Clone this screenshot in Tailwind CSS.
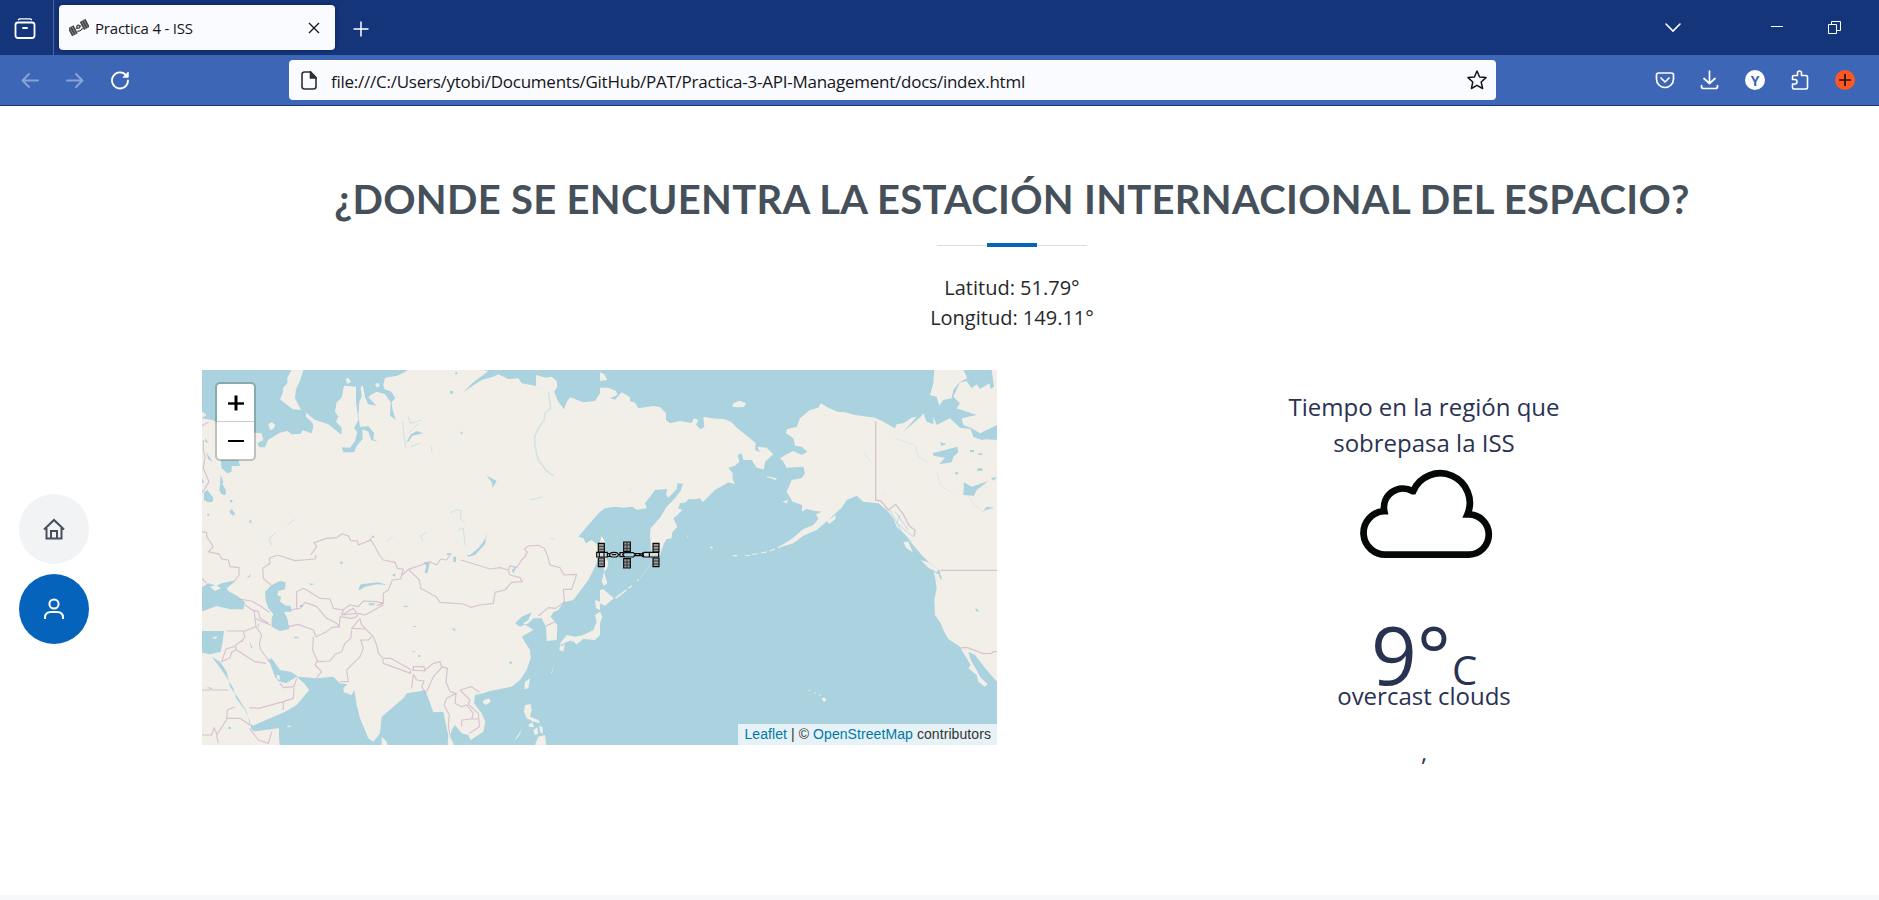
<!DOCTYPE html>
<html lang="es">
<head>
<meta charset="utf-8">
<title>Practica 4 - ISS</title>
<script src="https://cdn.jsdelivr.net/npm/@tailwindcss/browser@4"></script>
</head>
<body class="w-[1879px] h-[900px] overflow-hidden bg-white font-['Open_Sans',sans-serif]">
<div class="flex flex-col h-[900px]">
  <!-- Tab strip -->
  <header class="flex h-[55px] shrink-0 bg-[#15357b] text-white">
    <div class="flex w-[54px] items-center justify-center border-r border-[#4a659c] pt-0.5 pr-1">
      <svg class="w-[22px] h-[22px]" viewBox="0 0 22 22" fill="none" stroke="currentColor" stroke-width="1.8" stroke-linecap="round"><path d="M4.500 1.700Q5 .900 6 .900H16Q17 .900 17.500 1.700" stroke-width="1.300"/><rect x="1.500" y="4.500" width="19" height="15.500" rx="2.500"/><path d="M9 10h4"/></svg>
    </div>
    <div class="ml-[5px] mt-[5px] flex h-[45px] w-[276px] items-center rounded bg-[#fafbff] pl-[10px] pr-[15px] text-[#15141a] shadow-[0_0_4px_#0006]">
      <svg class="w-[20px] h-[18px]" viewBox="0 0 20 18"><g transform="rotate(-28 10 9)"><path d="M0 4h6.500v9H0zM13.500 4H20v9h-6.500z" fill="#444"/><path d="M2 4v9M4.500 4v9M15.500 4v9M18 4v9" stroke="#bbb" stroke-width=".5"/><circle cx="10" cy="7.500" r="1.600" fill="#bbb" stroke="#333"/><path d="M7 11q3 2 6 0M7 8h1.500M11.500 8H13" stroke="#333" fill="none"/></g></svg>
      <span class="ml-[6px] flex-1 pt-px text-[15px] tracking-[-0.2px]">Practica 4 - ISS</span>
      <svg class="w-[12px] h-[12px]" viewBox="0 0 12 12" stroke="currentColor" stroke-width="1.300"><path d="M1 1l10 10M11 1L1 11"/></svg>
    </div>
    <svg class="ml-[18px] mt-[21px] w-[16px] h-[16px]" viewBox="0 0 16 16" stroke="currentColor" stroke-width="1.500"><path d="M8 .5v15M.5 8h15"/></svg>
    <div class="ml-auto flex items-start pr-[38px]">
      <svg class="mt-[22px] mr-[89px] w-[18px] h-[11px]" viewBox="0 0 18 11" fill="none" stroke="currentColor" stroke-width="1.600" stroke-linecap="round"><path d="M2 2l7 7 7-7"/></svg>
      <div class="mt-[26px] mr-[45px] h-px w-[12px] bg-white"></div>
      <svg class="mt-[21px] w-[13px] h-[13px]" viewBox="0 0 13 13" fill="none" stroke="currentColor"><path d="M.5 3.500h8v9h-8zM3.500 3V.5h9v9H9"/></svg>
    </div>
  </header>
  <!-- Toolbar -->
  <div class="flex h-[51px] shrink-0 items-start border-b border-[#15357b] bg-[#3e66b7] text-white">
    <div class="flex w-[289px] items-center gap-[27px] pl-[21px] pt-[15px]">
      <svg class="w-[18px] h-[18px] opacity-40" viewBox="0 0 18 18" fill="none" stroke="currentColor" stroke-width="1.800" stroke-linecap="round" stroke-linejoin="round"><path d="M17 9.500H1.500M8 3L1.500 9.500 8 16"/></svg>
      <svg class="w-[18px] h-[18px] opacity-40" viewBox="0 0 18 18" fill="none" stroke="currentColor" stroke-width="1.800" stroke-linecap="round" stroke-linejoin="round"><path d="M1 9.500h15.500M10 3l6.500 6.500-6.500 6.500"/></svg>
      <svg class="-ml-px w-[20px] h-[20px]" viewBox="0 0 20 20" fill="none" stroke="currentColor" stroke-width="1.800" stroke-linecap="round"><path d="M16.300 5.500A8 8 0 1 0 18 10.500"/><path d="M18.200 2.500v4.700h-4.700z" fill="currentColor" stroke-width="1"/></svg>
    </div>
    <div class="mt-[5px] flex h-[40px] w-[1207px] items-center rounded bg-[#fafbff] pl-[12px] pr-[8px] text-[#15141a]">
      <svg class="w-[16px] h-[19px]" viewBox="0 0 16 19" fill="none" stroke="#2d2e33" stroke-width="1.600"><path d="M3.500 1H9.500L15 6.500V15.500Q15 18 12.500 18H3.500Q1 18 1 15.500V3.500Q1 1 3.500 1Z"/><path d="M9.500 1v6H15z" fill="#2d2e33"/></svg>
      <span class="ml-[14px] flex-1 pt-[4px] text-[17px] tracking-[-0.25px]">file:///C:/Users/ytobi/Documents/GitHub/PAT/Practica-3-API-Management/docs/index.html</span>
      <svg class="w-[22px] h-[22px]" viewBox="0 0 22 22" fill="none" stroke="currentColor" stroke-width="1.500" stroke-linejoin="round"><path d="M11 2l2.600 6 6.400.6-4.800 4.400 1.400 6.500L11 16.300 5.400 19.500 6.800 13 2 8.600 8.400 8z"/></svg>
    </div>
    <div class="ml-auto flex items-center gap-[25px] pr-[24px] pt-[15px]">
      <svg class="w-[20px] h-[20px]" viewBox="0 0 20 20" fill="none" stroke="currentColor" stroke-width="1.700" stroke-linecap="round" stroke-linejoin="round"><path d="M3.500 3h13Q18.500 3 18.500 5V9A8.500 8.500 0 0 1 1.500 9V5Q1.500 3 3.500 3Z"/><path d="M6 8l4 4 4-4"/></svg>
      <svg class="w-[20px] h-[20px]" viewBox="0 0 20 20" fill="none" stroke="currentColor" stroke-width="1.700" stroke-linecap="round" stroke-linejoin="round"><path d="M9.500 1v12.500M4 8.500L9.500 13.500l5.500-5M1.500 15.500V16.500Q1.500 18.500 3.500 18.500H15.500Q17.500 18.500 17.500 16.500V15.500"/></svg>
      <div class="flex h-[20px] w-[20px] items-center justify-center rounded-full bg-white text-[14px] font-bold text-[#3e66b7]">Y</div>
      <svg class="w-[20px] h-[20px]" viewBox="0 0 20 20" fill="none" stroke="currentColor" stroke-width="1.600" stroke-linejoin="round"><path d="M4 5.500H7.500V3Q7.500 1 9.500 1T11.500 3V5.500H16Q17.500 5.500 17.500 7V17.500Q17.500 19 16 19H4Q2.500 19 2.500 17.500V14H5Q7 14 7 11.800T5 9.500H2.500V7Q2.500 5.500 4 5.500Z"/></svg>
      <svg class="w-[20px] h-[20px]" viewBox="0 0 20 20"><circle cx="10" cy="10" r="10" fill="#ff5722"/><path d="M10 4v12M4 10h12" stroke="#1c1212" stroke-width="1.700"/></svg>
    </div>
  </div>
  <!-- Page -->
  <main class="relative flex flex-1 flex-col border-b-[5px] border-[#f7f8f9] pl-[202px] pr-[57px]">
    <nav class="absolute left-[19px] top-[388px] flex flex-col gap-[10px]">
      <a class="flex h-[70px] w-[70px] items-center justify-center rounded-full bg-[#f2f3f5] text-[#45505b]">
        <svg class="w-[22px] h-[22px]" viewBox="0 0 22 22" fill="none" stroke="currentColor" stroke-width="2"><path d="M1 11.500L11 2l10 9.500M3.500 10v10.500h15V10M8 20.500v-7.500h6v7.500"/></svg>
      </a>
      <a class="flex h-[70px] w-[70px] items-center justify-center rounded-full bg-[#0563bb] text-white">
        <svg class="w-[22px] h-[22px]" viewBox="0 0 22 22" fill="none" stroke="currentColor" stroke-width="2"><circle cx="11" cy="6" r="4.600"/><path d="M2 21v-1.500Q2 14 8 14H14Q20 14 20 19.500V21"/></svg>
      </a>
    </nav>
    <h2 class="mt-[69px] h-[48px] whitespace-nowrap text-center font-['Lato',sans-serif] text-[40px] font-bold leading-[48px] tracking-[0.3px] text-[#45505b]">¿DONDE SE ENCUENTRA LA ESTACIÓN INTERNACIONAL DEL ESPACIO?</h2>
    <div class="mx-auto mt-[20px] flex h-[4px] w-[150px] items-center">
      <span class="h-px flex-1 bg-[#dddddd]"></span><span class="h-[4px] w-[50px] bg-[#0563bb]"></span><span class="h-px flex-1 bg-[#dddddd]"></span>
    </div>
    <div class="mt-[26px] text-center text-[20px] leading-[30px] text-[#272829]">
      <p>Latitud: 51.79°</p>
      <p>Longitud: 149.11°</p>
    </div>
    <div class="mt-[37px] flex gap-[32px] pr-[3px]">
      <!-- Map -->
      <div class="relative h-[375px] w-[795px] shrink-0 overflow-hidden bg-[#aad3df]">
        <svg class="block w-[795px] h-[375px]" viewBox="0 0 795 375">
          <!-- north west quadrant -->
          <svg x="-2" y="-5" width="400" height="190" viewBox="0 0 1200 570">
            <rect width="1200" height="570" fill="#f2efe9"/>
            <g fill="#aad3df">
              <path d="M0 0H620V18L592 32 555 38 550 60 553 72 574 80 586 100 575 112 577 130 582 150 588 165 570 152 572 112 555 88 530 80 512 90 505 97 530 122 505 118 496 100 488 60 482 68 485 95 478 110 475 150 480 185 505 184 522 203 520 222 533 230 514 225 505 200 487 193 488 222 472 240 462 262 430 262 425 247 450 248 465 228 472 200 462 190 475 165 468 110 468 65 432 62 425 98 410 112 405 140 415 155 408 170 425 188 424 209 385 178 345 165 318 143 318 155 337 173 340 185 335 205 308 196 302 206 275 208 263 198 240 203 225 212 204 225 195 247 178 247 172 235 190 225 185 205 165 203 120 180 55 175 38 165 5 160 20 150 0 135Z"/>
              <path d="M850 15H1200V85L1185 108 1150 112 1110 97 1100 112 1092 133 1075 110 1065 90 1045 78 1005 62 965 55 955 40 925 42 895 28 880 35 845 45 825 58 790 82 820 52 838 38 865 18Z"/>
              <path d="M1200 440L1165 480 1135 515 1150 520 1158 535 1175 525 1200 545ZM862 498L857 520 835 550 810 570 825 570 855 538ZM62 285H116L120 303 95 303 95 320 82 325 65 310ZM12 382L22 375 40 398 38 410 25 412 12 405ZM62 330L70 350 67 358 78 375 77 390 65 388 58 375 60 358ZM95 432L106 447 98 452 88 440ZM18 260L38 290 25 283ZM16 220L25 235 15 230ZM6 340L12 352 6 355Z"/>
              <path d="M750 78h9v8h-9zM782 200h5v8h-5zM90 405h7v7h-7zM22 446h6v6h-6zM148 466h6v7h-6zM515 512h8v6h-8zM740 565h14v5h-14zM766 22h6v6h-6z"/>
              <path d="M620 230L632 208 650 198 670 205 637 212 625 230ZM860 332L890 348 878 368 875 352Z"/>
            </g>
            <g fill="none" stroke="#aad3df" stroke-opacity=".5" stroke-width="4">
              <path d="M1045 75L1052 130 1035 145 1033 165 1015 190 1004 215 1005 245 1015 285 1040 318 1062 333"/>
              <g stroke-width="3"><path d="M608 170L612 210 617 250M625 155L632 175 665 165M655 175L625 205M632 245L660 235M695 245V260M750 443L770 434 785 438 780 460 795 475M775 495L790 490 795 540M228 502L208 520 215 542M262 480L285 463M560 530L578 515M678 502L662 512 668 530M990 405L1028 396M1052 520L1065 522"/></g>
            </g>
            <g fill="#f2efe9"><path d="M275 15H310L300 48 288 72 285 100 303 135 278 133 255 115 240 103 248 85 250 68 262 55 262 38ZM205 178L216 172 226 180 220 192 210 195ZM437 42L445 38 453 50 442 57ZM525 56L535 54 540 63 530 68ZM1008 30L1038 38 1055 35 1070 48 1072 65 1062 80 1070 98 1055 88 1025 70 1008 65Z"/></g>
            <g fill="none" stroke="#c9abc4" stroke-opacity=".65" stroke-width="3.500">
              <path d="M0 185L25 172M10 225V255L15 275 10 310 27 350 15 370 6 383M6 500L20 503 20 515 40 545 25 560 60 568M332 570L350 545 342 533 380 520 410 518 425 507 445 512 452 527 473 528 475 540 513 525 525 545 538 570M505 530L513 520M975 570L983 562 973 553 985 543 1015 541 1033 550 1042 570"/>
            </g>
          </svg>
          <!-- north east quadrant -->
          <svg x="398" y="-5" width="400" height="190" viewBox="0 0 1200 570">
            <g fill="#f2efe9">
              <path d="M0 68L25 68 48 78 52 90 30 100 45 104 65 82 90 97 90 108 105 113 115 130 160 123 180 126 198 145 198 165 210 175 240 168 275 174 282 160 295 165 288 180 302 193 313 185 310 155 335 160 375 163 395 172 412 190 450 220 467 235 465 255 480 262 472 245 500 248 520 268 495 290 492 313 470 308 455 285 430 285 425 265 413 270 418 290 405 302 385 308 398 325 398 343 405 358 385 352 345 375 308 412 300 400 285 403 265 402 258 412 240 415 235 430 247 435 232 450 220 460 232 485 217 502 215 520 200 522 192 535 180 570 155 570 150 510 152 490 180 458 200 425 225 400 243 375 249 356 232 355 230 373 205 398 198 388 202 372 165 375 150 395 135 415 140 430 110 434 97 425 70 428 45 425 15 430 0 440ZM0 22L12 27 22 45 0 48ZM397 125L400 115 418 107 438 115 432 126 412 127ZM498 333L530 340 528 345 502 337ZM260 508l5 10-3-1zM0 530L5 512 15 530V570H0ZM330 545h8v5h-8z"/>
              <path d="M540 280L560 268 580 258 605 270 622 260 605 245 585 242 580 220 558 205 560 193 590 185 600 160 630 135 655 128 662 115 685 128 712 140 735 142 765 150 825 158 850 170 885 190 890 178 910 175 935 158 950 155 930 178 910 200 945 170 962 155 970 145 980 170 1000 178 1000 155 1010 180 1050 160 1080 188 1112 192 1120 215 1145 225 1191 215V570H965L935 535 910 505 890 485 880 460 865 440 835 415 790 410 770 392 740 405 725 428 685 465 650 495 610 512 580 535 530 550 575 522 610 492 640 480 655 462 648 448 665 440 645 438 620 432 605 440 607 420 578 410 560 380 575 345 605 340 615 325 610 305 560 308 550 290ZM690 462L708 450 706 462 688 477 680 468ZM547 410l17-5-3 10zM660 460L690 430 715 398 735 390 710 430 700 450 680 455Z"/>
              <path d="M1003 15H1090L1102 40 1080 50 1060 75 1055 100 1030 105 1018 122 1010 95 990 90 1000 55ZM1060 95L1080 52 1100 48 1115 70 1130 58 1140 72 1168 55 1172 72 1182 65 1175 15H1191V180L1140 205 1115 190 1090 180 1085 160 1130 150 1095 138 1070 130 1080 115ZM910 530L925 530 938 562 918 548Z"/>
            </g>
            <g fill="#aad3df"><path d="M998 265L1035 255 1072 245 1075 262 1060 275 1055 292 1018 298 1035 278 1000 272ZM1092 352L1115 365 1165 348 1130 375 1122 392 1090 390ZM1145 445L1160 425 1182 428 1155 436ZM1120 218L1180 208 1191 212 1190 225 1150 222ZM1020 232l20 5-15 6zM1110 255h12v6h-12zM1132 310h15v8h-15zM1065 322h10v6h-10zM1172 340l18-5-8 12zM1135 265h12v5h-12z"/></g>
            <g fill="none" stroke="#aad3df" stroke-opacity=".7"><path d="M870 435L905 500 935 530M885 440L925 495M900 450L890 475 940 515" stroke-width="3"/><path d="M885 220L945 240 955 275 985 292M1010 320L1022 362 1060 385M790 265L815 292M1095 385L1145 440M850 380L858 392M85 378L95 368" stroke-width="2" stroke-opacity=".45"/></g>
            <path d="M550 541L505 560 455 569" fill="none" stroke="#f2efe9" stroke-opacity=".8" stroke-width="4" stroke-dasharray="18 9"/>
            <path d="M827 168V405L843 408 865 435 887 418 910 448 928 483 945 495 942 515" fill="none" stroke="#c9abc4" stroke-opacity=".65" stroke-width="4"/>
          </svg>
          <!-- south west quadrant -->
          <svg x="-2" y="185" width="400" height="195" viewBox="0 0 1200 585">
            <rect width="1200" height="585" fill="#f2efe9"/>
            <g fill="#aad3df">
              <path d="M0 100L25 85 50 92 65 85 110 75 80 100 85 108 115 125 135 142 130 163 90 163 50 153 10 168 0 165ZM0 228H72L68 260 62 290 30 298 0 292Z"/>
              <path d="M195 110L215 90 240 78 257 82 255 103 235 108 232 120 243 125 240 140 258 152 272 155 275 170 252 170 262 190 268 222 240 228 215 215 215 190 220 178 205 160 197 135Z"/>
              <path d="M35 305L60 338 75 360 100 400 108 430 135 465 150 500 155 530 235 520 240 585H1200V0L1185 35 1165 75 1120 135 1090 142 1075 165 1060 172 1052 185 1072 210 1070 255 1040 258 1038 215 1025 190 1000 190 985 205 960 215 945 205 965 185 995 172 985 195 970 205 1000 225 965 245 975 262 990 285 992 310 980 345 960 375 935 395 870 408 850 415 825 420 822 445 845 475 856 500 850 530 812 555 805 540 785 535 765 510 755 525 750 545 770 585H742L745 540 738 510 730 470 700 472 685 430 675 405 650 410 620 415 610 430 545 485 540 535 520 560 505 550 480 490 470 450 463 405 455 420 432 412 430 400 442 388 420 385 400 365 350 370 295 365 272 350 240 345 215 310 205 315 212 330 225 365 235 378 258 385 290 365 312 385 328 405 315 420 290 450 255 470 160 512 148 505 140 470 115 430 90 395 80 350 60 320Z"/>
              <path d="M475 105L482 88 535 82 562 90 530 88 495 95 480 105ZM505 145l20 0-5 6-12 0zM753 220l14 2-2 7zM326 85l18 2-12 4zM420 20h8v6h-8zM283 245h12v5h-12zM612 152h10v4h-10zM640 213h8v3h-8zM635 286l12 4-6 2zM655 300h6v6h-6zM928 320h8v6h-8zM85 516h8v6h-8zM148 258l10 22-5-2zM175 205l4 12-6-5zM935 45L950 35 940 55ZM670 20l20 5-8 30-8-2 5-20zM760 5h8v16h-8zM800 0l25 0-20 5zM575 60l12-5-2 10zM140 68l12-10-2 8zM260 152h12v6h-12zM300 150h8v6h-8zM20 395l20 5-10 3z"/>
            </g>
            <g fill="#f2efe9">
              <path d="M155 585L150 520 170 535 215 530 238 520 235 545 215 585ZM545 545L560 560 565 585 545 585ZM990 370L985 400 973 402 975 380ZM852 435L868 430 872 440 858 450 848 443ZM975 450L992 447 995 465 990 485 1015 495 1020 505 1000 500 980 490 972 470ZM1015 545L1035 540 1040 585 1005 570ZM985 510l12-8 5 15-14-2zM1000 525l12-8 2 20-10 3zM1018 510l10 8 0 20-8-8zM942 558L968 520 955 545ZM1200 170L1185 180 1190 200 1180 225 1150 240 1125 245 1100 240 1080 265 1085 275 1095 265 1090 290 1078 285 1080 270 1115 255 1130 268 1150 252 1185 255 1200 240ZM35 248l18-4-6 8zM230 360l8 0 2 15-8-3zM262 512h10v4h-10zM30 95l18-5 15 10-18 8zM1185 135l15 5v25l-12-5zM780 500l10 30 25 5-10-20-5-20z"/>
              <path d="M1110 250L1120 252 1115 262ZM1065 325l-10 30-2 0z"/>
            </g>
            <g fill="none" stroke="#c9abc4" stroke-opacity=".65" stroke-width="3.500" stroke-linejoin="round">
              <path d="M6 70L20 85M60 0L65 12 85 15 90 35 117 38V60L105 75M213 90L190 70 188 40 210 25 208 10 232 0M232 0L285 17 345 12 348 0M538 0L550 15 585 22 592 40 610 42 605 60 602 72 577 75 565 105 550 115V145L530 152M625 43L607 60M625 43L655 33 690 20 710 30 722 12 740 15 750 0M783 15L870 42 900 38 925 45 930 32 950 38 965 15 980 0M1042 0L1050 30 1080 38 1092 60 1130 58 1115 103H1090L1093 140 1068 160 1045 158 1015 183M625 43L658 75 662 100 708 125 720 142 790 147 812 157 840 150 880 145 885 112 915 105 935 82 967 80 960 68 930 60 925 48"/>
              <path d="M115 132L155 138 185 155 190 160 208 172M160 165L175 170 180 190 205 205M162 165L165 190 175 195 212 210M135 150L162 168M165 190L168 215M80 228H135L168 215 185 240 178 265 182 285 205 315 205 320M290 160V110L310 100 325 108 360 130 390 132 400 160 428 165 450 150 475 155 490 138 530 140 550 145M270 165L300 160 315 142 350 155 380 190 410 205 418 215M265 215L295 208 340 225 348 245 380 230 395 218 420 215M340 245L338 285 352 318 345 330 365 350 350 368M352 320L390 318 405 298 425 290 435 265 452 250 455 225M418 215L420 185 455 190 470 185 475 175 495 180 550 150M430 165L425 180 470 175 460 160 430 178M480 190L485 210 520 245 530 270 535 295 550 310M480 190L455 220 495 222M515 245L505 255 482 255 490 280 480 305 440 345 445 380 420 380M550 310L572 310 630 342 632 355 550 325 548 312M635 345L675 348 672 335 640 335V348M675 345L700 325 720 320 725 338 700 365 680 410M640 358L635 400M640 358L650 375 672 378 665 395 678 415M725 335L742 340 738 380 750 410 768 415 740 430 732 450 748 480 745 510 750 540M768 415L765 445 785 455 800 450 820 475 815 492 785 495 785 515M780 405L815 395 838 412M780 405L810 435 805 448 835 475 838 515 808 535M815 492H838M103 275L78 282 65 320 90 308 95 292 108 285M128 255L105 272 110 285 165 320 198 325M130 230L135 245 125 260M240 385L250 398 282 395 290 370M282 400L280 430 250 440 250 465M250 440L175 460 148 458M6 405H85M105 455L82 465 80 490 120 490 150 510M82 490L50 540 55 565M6 540L35 540 42 518 52 540M148 520L175 555 205 565 215 530M1038 213L1065 200"/>
            </g>
          </svg>
          <!-- south east quadrant -->
          <svg x="398" y="185" width="400" height="195" viewBox="0 0 1200 585">
            <g fill="#f2efe9">
              <path d="M965 0H1191V380L1160 345 1125 300 1105 290 1112 315 1130 345 1140 365 1163 388 1155 395 1135 380 1130 360 1105 340 1112 330 1100 310 1088 290 1080 275 1045 252 1030 225 1022 205 1005 180 1003 135 1010 100 1005 65 1000 50 1020 60 1020 48 985 20ZM962 15L985 22 1015 45 1010 52 985 38Z"/>
              <path d="M10 0L25 20 22 40 12 50 22 85 12 92 5 80 12 50ZM0 105L10 103 42 130 15 152 0 145ZM0 170L7 185 0 205ZM665 432L672 427 680 435 672 441ZM655 417l10 4-3 2zM642 411l7 3-4 2zM625 404l8 3-6 2zM400 0h12v4h-12zM430 0l25 0-12 4z"/>
              <path d="M45 128L78 103 80 107 48 131ZM83 98L97 90 95 95 86 101ZM108 80l8-8 0 5z"/>
            </g>
            <path d="M1125 160l8 3 4 8-8-2zM1017 48l8 20-2 8-6-12z" fill="#aad3df"/>
            <path d="M120 70L145 35 155 15" fill="none" stroke="#f2efe9" stroke-opacity=".5" stroke-width="2"/>
            <path d="M1022 46H1191M1083 278H1103L1150 296 1175 295 1180 290H1191" fill="none" stroke="#c9abc4" stroke-opacity=".65" stroke-width="4"/>
          </svg>
          <!-- station marker -->
          <svg x="358" y="150" width="140" height="90" viewBox="0 0 420 270">
            <g stroke="#0a0a0a" stroke-width="3.500" fill="#d5dfe0">
              <path d="M115 70h18v26h-18zM115 114h18v26h-18zM279 70h18v26h-18zM279 114h18v26h-18zM191 66h20v28h-20zM191 116h20v28h-20z" fill="#999"/>
              <path d="M110 97h32v14h-32zM118 97v14M132 97v14M142 101h8v8h-8z"/>
              <ellipse cx="162" cy="104" rx="13" ry="7"/><path d="M155 104h14M175 104h5M180 98h10v12h-10z"/>
              <path d="M194 98H220L226 104 220 111H194L188 104ZM226 101h14v6h-14z" fill="#aad3df"/>
              <path d="M240 104l8-5v10z"/><path d="M252 97h16v14h-16q-6-7 0-14zM268 97h28v14h-28z"/>
              <path d="M201 66v28M201 116v28M115 79h18M115 88h18M115 123h18M115 132h18M279 79h18M279 88h18M279 123h18M279 132h18M191 75h20M191 85h20M191 126h20M191 135h20" stroke-width="2"/>
            </g>
          </svg>
        </svg>
        <div class="absolute left-[13px] top-[12px] flex h-[79px] w-[41px] flex-col rounded-[5px] border-2 border-black/20 bg-white bg-clip-padding text-black">
          <div class="flex h-[38px] items-center justify-center border-b border-[#ccc] pt-px"><svg class="w-[16px] h-[16px]" viewBox="0 0 16 16" stroke="currentColor"><path d="M8 .5v15" stroke-width="3"/><path d="M0 8.500h16" stroke-width="2.400"/></svg></div>
          <div class="flex flex-1 items-center justify-center"><div class="h-[2px] w-[16px] bg-black"></div></div>
        </div>
        <div class="absolute bottom-0 right-0 h-[21px] whitespace-nowrap bg-white/70 px-[6px] font-['Liberation_Sans',sans-serif] text-[14px] leading-[21px] tracking-[0.08px] text-[#333]"><span class="text-[#0078a8]">Leaflet</span> | © <span class="text-[#0078a8]">OpenStreetMap</span> contributors</div>
      </div>
      <!-- Weather -->
      <section class="flex flex-1 flex-col items-center pt-[19px] text-center text-[24px] leading-[36px] text-[#293251]">
        <p>Tiempo en la región que<br>sobrepasa la ISS</p>
        <svg class="mt-[5px] ml-[5px] h-[95px] w-[138px]" viewBox="290 253 420 288" fill="none" stroke="#050808" stroke-width="20.500"><path d="M378 522A66 66 0 0 1 368 390H370A58 58 0 0 1 456 329H458A88 88 0 0 1 623 400H626A61 61 0 0 1 628 522Z"/></svg>
        <div class="mt-[53px] flex h-[80px] items-baseline leading-[80px]"><span class="text-[80px]">9°</span><span class="ml-px text-[40px]">C</span></div>
        <p class="-mt-[16px]">overcast clouds</p>
        <p class="mt-[20px]">,</p>
      </section>
    </div>
  </main>
</div>
</body>
</html>
